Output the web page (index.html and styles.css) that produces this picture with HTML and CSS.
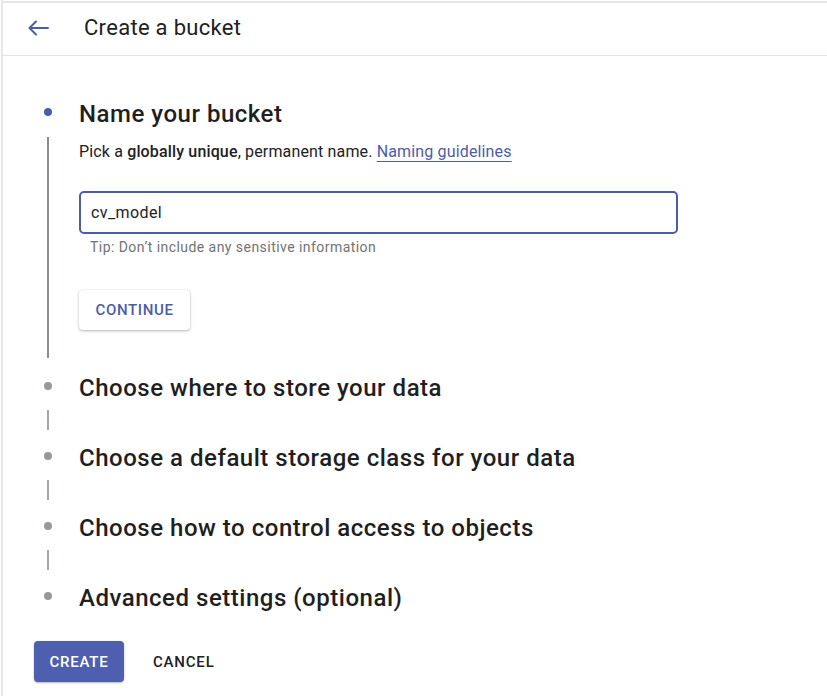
FILE: index.html
```html
<!DOCTYPE html>
<html lang="en">
<head>
<meta charset="utf-8">
<title>Create a bucket</title>
<link rel="stylesheet" href="styles.css">
</head>
<body>
<div class="page">
  <header class="topbar">
    <button class="back" aria-label="Back">
      <svg width="24" height="16" viewBox="0 0 24 16" aria-hidden="true">
        <path d="M2.5 8 H21 M9 1.5 L2.5 8 L9 14.5" fill="none" stroke="#4b5cad" stroke-width="2" stroke-linecap="round" stroke-linejoin="round"/>
      </svg>
    </button>
    <h1 class="title">Create a bucket</h1>
  </header>

  <main class="content">
    <ol class="stepper">
      <li class="step step-active">
        <span class="dot"></span>
        <h2 class="step-title">Name your bucket</h2>
        <span class="rail rail-long"></span>
        <div class="step-body">
          <p class="hint">Pick a <b>globally unique</b>, permanent name. <a class="link" href="#">Naming guidelines</a></p>
          <div class="field">
            <input class="input" type="text" value="cv_model">
          </div>
          <p class="tip">Tip: Don’t include any sensitive information</p>
          <button class="btn-continue">CONTINUE</button>
        </div>
      </li>
      <li class="step">
        <span class="dot"></span>
        <h2 class="step-title">Choose where to store your data</h2>
        <span class="rail"></span>
        <div class="step-gap"></div>
      </li>
      <li class="step">
        <span class="dot"></span>
        <h2 class="step-title">Choose a default storage class for your data</h2>
        <span class="rail"></span>
        <div class="step-gap"></div>
      </li>
      <li class="step">
        <span class="dot"></span>
        <h2 class="step-title">Choose how to control access to objects</h2>
        <span class="rail"></span>
        <div class="step-gap"></div>
      </li>
      <li class="step step-last">
        <span class="dot"></span>
        <h2 class="step-title">Advanced settings (optional)</h2>
      </li>
    </ol>

    <div class="actions">
      <button class="btn-create">CREATE</button>
      <button class="btn-cancel">CANCEL</button>
    </div>
  </main>
</div>
</body>
</html>
```

FILE: styles.css
```css
* { box-sizing: border-box; }

html, body {
  margin: 0;
  padding: 0;
  background: #ffffff;
}

body {
  font-family: Roboto, "Liberation Sans", Arial, sans-serif;
  color: #202124;
}

.page {
  min-height: 696px;
  margin-left: 1px;
  border-left: 2px solid #e6e6ee;
  padding-top: 1px;
}

.topbar {
  height: 55px;
  border-top: 2px solid #e6e6ee;
  border-bottom: 1px solid #e3e3e8;
  display: flex;
  align-items: center;
  padding-left: 24px;
  padding-bottom: 3px;
}

.back {
  border: 0;
  background: transparent;
  padding: 0;
  width: 24px;
  height: 16px;
  display: flex;
  align-items: center;
  cursor: pointer;
}

.title {
  margin: 0 0 0 33px;
  font-size: 22px;
  font-weight: 400;
  letter-spacing: 0.3px;
  line-height: 28px;
  color: #202124;
}

.content {
  padding-top: 41px;
}

.stepper {
  list-style: none;
  margin: 0;
  padding: 0 0 0 14px;
}

.step {
  display: grid;
  grid-template-columns: 62px 1fr;
  grid-template-rows: 30px auto;
}

.dot {
  grid-column: 1;
  grid-row: 1;
  justify-self: center;
  align-self: center;
  width: 8px;
  height: 8px;
  border-radius: 50%;
  background: #96989e;
}

.step-active .dot {
  background: #4b5cad;
}

.step-title {
  grid-column: 2;
  grid-row: 1;
  margin: 0;
  padding-top: 4px;
  font-size: 24px;
  font-weight: 500;
  letter-spacing: 0.52px;
  line-height: 26px;
  color: #1f1f1f;
  white-space: nowrap;
}

.rail {
  grid-column: 1;
  grid-row: 2;
  justify-self: center;
  width: 2px;
  background: #a4a6ab;
  margin: 9px 0 11px;
}

.rail-long {
  background: #8c8e94;
  margin: 10px 0 13px;
}

.step-gap {
  grid-column: 2;
  grid-row: 2;
  height: 40px;
}

.step-body {
  grid-column: 2;
  grid-row: 2;
  padding: 15px 0 41px;
}

.hint {
  margin: 0;
  font-size: 16px;
  letter-spacing: 0.15px;
  line-height: 20px;
  color: #202124;
}

.hint b {
  font-weight: 500;
}

.link {
  color: #4b5cad;
  text-decoration: underline;
  text-decoration-thickness: 1px;
  text-underline-offset: 4px;
}

.field {
  margin-top: 29px;
  width: 599px;
}

.input {
  display: block;
  width: 100%;
  height: 43px;
  border: 2px solid #4b5cad;
  border-radius: 5px;
  padding: 0 10px;
  font-family: inherit;
  font-size: 16px;
  letter-spacing: 0.4px;
  color: #202124;
  outline: none;
  background: #fff;
}

.tip {
  margin: 5px 0 0 11px;
  font-size: 14px;
  letter-spacing: 0.45px;
  line-height: 16px;
  color: #6f7378;
}

.btn-continue {
  margin-top: 35px;
  width: 111px;
  height: 40px;
  border: 0;
  border-radius: 4px;
  background: #fff;
  box-shadow: 0 1px 3px rgba(0, 0, 0, 0.28), 0 0 1px rgba(0, 0, 0, 0.12);
  font-family: inherit;
  font-size: 15px;
  font-weight: 500;
  color: #4b5cad;
  letter-spacing: 0.65px;
  cursor: pointer;
}

.actions {
  display: flex;
  align-items: center;
  gap: 10px;
  margin-top: 30px;
  padding-left: 31px;
}

.btn-create {
  width: 90px;
  height: 41px;
  border: 0;
  border-radius: 4px;
  background: #4d5fae;
  color: #fff;
  font-family: inherit;
  font-size: 15px;
  font-weight: 500;
  letter-spacing: 0.8px;
  box-shadow: 0 1px 2px rgba(0, 0, 0, 0.3);
  cursor: pointer;
}

.btn-cancel {
  height: 41px;
  padding: 0 19px;
  border: 0;
  background: transparent;
  color: #202124;
  font-family: inherit;
  font-size: 15px;
  font-weight: 500;
  letter-spacing: 0.8px;
  cursor: pointer;
}
```
